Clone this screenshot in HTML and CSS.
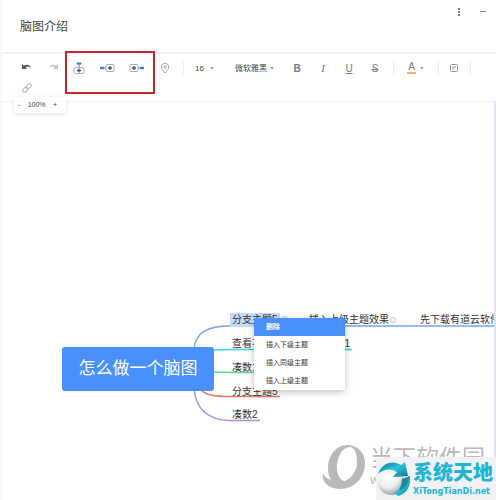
FILE: index.html
```html
<!DOCTYPE html>
<html lang="zh-CN">
<head>
  <meta charset="UTF-8">
  <title>脑图介绍</title>
  <link rel="stylesheet" href="styles.css">
</head>
<body>

<div class="app">
  <header class="header">
    <h1>脑图介绍</h1>
    <div class="window-controls">
      <button aria-label="更多"><svg width="10" height="10" viewBox="0 0 10 10"><path d="M4 1h2v2H4zM4 4h2v2H4zM4 7h2v2H4z" fill="#777b85"/></svg></button>
      <button aria-label="最小化"><svg width="10" height="10" viewBox="0 0 10 10"><path d="M2 4.500h6" stroke="#8a8e99"/></svg></button>
    </div>
  </header>

  <div class="toolbar">
    <button class="tool" aria-label="撤销"><svg width="12" height="12" viewBox="0 0 12 12"><path d="M1 2v5h5L4.500 5.400C6.800 3.800 9 4.300 10.500 7 9.500 2.500 5.500 1.700 2.800 3.800z" fill="#4d5361"/></svg></button>
    <button class="tool" aria-label="重做"><svg width="12" height="12" viewBox="0 0 12 12"><path d="M11 2v5H6l1.500-1.600C5.200 3.800 3 4.300 1.500 7 2.500 2.500 6.500 1.700 9.200 3.800z" fill="#c3c6cc"/></svg></button>
    <button class="tool" aria-label="插入下级主题"><svg width="12" height="14" viewBox="0 0 12 14"><path d="M3.500 2.500h5" stroke="#3c82ec" stroke-width="2"/><path d="M6 3v3" stroke="#3c82ec"/><rect x="1" y="6.500" width="10" height="6" rx="1.500" fill="none" stroke="#a9adb5"/><path d="M6 7.500v4M4 9.500h4" stroke="#4a505e" stroke-width="1.300"/></svg></button>
    <button class="tool wide" aria-label="插入同级主题"><svg width="16" height="12" viewBox="0 0 16 12"><path d="M1 6h4" stroke="#3c82ec" stroke-width="2.500"/><path d="M5 6h2" stroke="#3c82ec"/><rect x="7" y="2.500" width="8" height="7" rx="1" fill="none" stroke="#a9adb5"/><path d="M11 4v4M9 6h4" stroke="#4a505e" stroke-width="1.300"/></svg></button>
    <button class="tool wide" aria-label="插入上级主题"><svg width="16" height="12" viewBox="0 0 16 12"><path d="M11 6h4" stroke="#3c82ec" stroke-width="2.500"/><path d="M9 6h2" stroke="#3c82ec"/><rect x="1" y="2.500" width="8" height="7" rx="1" fill="none" stroke="#a9adb5"/><path d="M5 4v4M3 6h4" stroke="#4a505e" stroke-width="1.300"/></svg></button>
    <button class="tool" aria-label="标记"><svg width="12" height="12" viewBox="0 0 12 12"><path d="M6 11C3.500 8.500 2.300 7 2.300 5a3.700 3.700 0 0 1 7.400 0c0 2-1.200 3.500-3.700 6z" fill="none" stroke="#a2a6ae"/><circle cx="6" cy="5" r="1.200" fill="none" stroke="#a2a6ae"/></svg></button>
    <span class="sep"></span>
    <label class="picker size"><select aria-label="字号"><option>16</option></select><i class="caret"></i></label>
    <label class="picker family"><select aria-label="字体"><option>微软雅黑</option></select><i class="caret"></i></label>
    <button class="tool" aria-label="加粗"><b>B</b></button>
    <button class="tool" aria-label="斜体"><em>I</em></button>
    <button class="tool" aria-label="下划线"><u>U</u></button>
    <button class="tool" aria-label="删除线"><s>S</s></button>
    <span class="sep"></span>
    <button class="tool color" aria-label="文字颜色"><span>A</span><i class="caret"></i></button>
    <span class="sep"></span>
    <button class="tool note" aria-label="备注"><svg width="10" height="10" viewBox="0 0 10 10"><rect x="1.500" y="1.500" width="7" height="7" rx="1" fill="none" stroke="#9094a0"/><path d="M3 4h4M3 6h2.500" stroke="#9094a0"/></svg></button>
    <span class="sep"></span>
    <button class="tool" aria-label="链接"><svg width="12" height="12" viewBox="0 0 12 12"><g fill="none" stroke="#b4b7bd" transform="rotate(-45 6 6)"><rect x=".5" y="4.200" width="6" height="3.600" rx="1.800"/><rect x="5.500" y="4.200" width="6" height="3.600" rx="1.800"/></g></svg></button>
    <div class="callout"></div>
  </div>

  <main class="canvas">
    <div class="zoom-box"><button aria-label="缩小">-</button><span>100%</span><button aria-label="放大">+</button></div>

    <svg class="lines" width="494" height="398" viewBox="0 102 494 398" fill="none" stroke-width="1.500">
      <path d="M194 348c2-15 13-22 36-22h264" stroke="#77a6ea"/>
      <path d="M214 350l18-.5h120" stroke="#3ccfd5"/>
      <path d="M214 372l18 .5h46" stroke="#5bd58f"/>
      <path d="M200 389c5 6 14 7.500 30 7.500h50" stroke="#e8726c"/>
      <path d="M194 389c2 20 14 31 36 31.500h30" stroke="#a592e4"/>
    </svg>

    <div class="node root">怎么做一个脑图</div>
    <div class="node n1 selected">分支主题5</div>
    <div class="node n2">插入上级主题效果<i class="dot"></i></div>
    <div class="node n3">先下载有道云软件</div>
    <div class="node n4"><span>查看不同主题</span><span>1</span></div>
    <div class="node n5">凑数1</div>
    <div class="node n6">分支主题5</div>
    <div class="node n7">凑数2</div>
    <i class="dot n1-dot"></i>

    <div class="menu">
      <button class="active">删除</button>
      <button>插入下级主题</button>
      <button>插入同级主题</button>
      <button>插入上级主题</button>
    </div>

    <div class="watermark">
      <svg width="44" height="48" viewBox="0 0 44 48"><path fill-rule="evenodd" d="M25 2C14 2 6 13 6 25c0 5 1 9 3 12-4-1-7-4-8-7-2 10 7 16 17 16 15 0 25-12 25-26C43 9 35 2 25 2zM28 4C18 5 15 17 15 25c0 6 3 13 8 13 8-4 12-11 12-19 0-8-2-14-7-15z" fill="#b9b9b9"/></svg>
      <div><strong>当下软件园</strong><small>www.downxia.com</small></div>
    </div>
    <div class="badge">
      <svg width="36" height="38" viewBox="0 0 36 38">
        <defs>
          <radialGradient id="ball" cx=".4" cy=".3" r=".7"><stop offset="0" stop-color="#fff"/><stop offset=".6" stop-color="#eceeef"/><stop offset="1" stop-color="#9da3a7"/></radialGradient>
          <linearGradient id="arrow" x2="1" y2="1"><stop offset="0" stop-color="#166783"/><stop offset=".5" stop-color="#29c5dc"/><stop offset="1" stop-color="#126e8c"/></linearGradient>
        </defs>
        <circle cx="15" cy="22" r="13" fill="url(#ball)"/>
        <path d="M2 14C5 4 16-1 25 5l4-3 3 14-15 1 4-5C14 8 8 9 2 14z" fill="url(#arrow)"/>
        <path d="M34 16c1 9-2 17-12 20l-4-3c5-3 8-7 8-14z" fill="url(#arrow)"/>
        <path d="M34 16l-8 3c0 5-1 8-3 11 5-1 9-6 11-14z" fill="#0f536b" opacity=".5"/>
      </svg>
      <div><strong>系统天地</strong><small>XiTongTianDi.net</small></div>
    </div>
  </main>
</div>

</body>
</html>
```

FILE: styles.css
```css
* { box-sizing:border-box; }
body { margin:0; font-family:"Liberation Sans","Noto Sans CJK SC",sans-serif; background:#fff; color:#333; }
button, select { font:inherit; color:inherit; background:none; border:none; padding:0; margin:0; cursor:pointer; }
svg { display:block; }

.app { min-height:100vh; display:flex; flex-direction:column; border-left:2px solid #f7f7f9; overflow:hidden; }

.header { height:54px; display:flex; justify-content:space-between; border-bottom:2px solid #f1f1f4; padding:0 8px 0 18px; }
.header h1 { margin:0; font-size:12px; line-height:54px; font-weight:normal; color:#444; }
.window-controls { display:flex; gap:14px; height:24px; align-items:center; }

.toolbar { position:relative; display:flex; flex-wrap:wrap; align-content:flex-start; padding:4px 0 3px 12px; border-bottom:1px solid #f1f1f4; }
.tool { width:26px; height:20px; display:flex; align-items:center; justify-content:center; font-size:10px; color:#737988; }
.tool.wide { width:30px; }
.tool b { font-weight:bold; }
.tool em { font-family:"Liberation Serif",serif; font-size:11px; }
.tool.color { width:35px; gap:4px; }
.tool.color span { line-height:10px; border-bottom:2px solid #f2b75c; padding:0 1px; }
.tool.note { width:22px; }
.sep { width:10px; height:12px; margin:4px 0; background:linear-gradient(#ececf0,#ececf0) center / 1px 100% no-repeat; }
.picker { display:flex; align-items:center; height:20px; }
.picker select { appearance:none; flex:1; min-width:0; font-size:8px; color:#444; }
.picker.size { width:40px; padding:0 14px 0 7px; }
.picker.family { width:56px; padding:0 10px 0 7px; }
.caret { width:4px; height:3px; background:#8b8f9a; clip-path:polygon(0 0,100% 0,50% 100%); }
.callout { position:absolute; left:63px; top:-3px; width:90px; height:43px; border:2px solid #c2272d; pointer-events:none; }

.canvas { flex:1; position:relative; min-height:398px; border-right:2px solid #dfe1f1; font-size:10px; line-height:14px; }
.zoom-box { position:absolute; left:12px; top:-5px; width:52px; height:16px; background:#fff; box-shadow:0 1px 4px rgba(70,90,140,0.2); display:flex; align-items:center; justify-content:space-between; padding:0 9px 0 4px; font-size:7px; color:#444; }
.lines { position:absolute; left:-2px; top:0; }

.node { position:absolute; white-space:nowrap; color:#333; }
.root { left:60px; top:245px; width:152px; height:44px; line-height:44px; border-radius:3px; background:#4a90fb; color:#fff; font-size:17px; text-align:center; }
.selected { background:#c3dcfa; }
.n1 { left:228px; top:211px; padding:0 2px; }
.n2 { left:307px; top:211px; display:flex; align-items:center; gap:1px; }
.n3 { left:418px; top:211px; right:0; overflow:hidden; }
.n4 { left:230px; top:235px; width:118px; display:flex; justify-content:space-between; }
.n5 { left:230px; top:259px; }
.n6 { left:230px; top:283px; }
.n7 { left:230px; top:306px; }
.dot { width:6px; height:6px; border:1px solid #c5c8d0; border-radius:50%; }
.n1-dot { position:absolute; left:280px; top:214px; }

.menu { position:absolute; left:252px; top:216px; width:91px; background:#fff; box-shadow:0 2px 7px rgba(0,0,0,0.25); font-size:7px; }
.menu button { display:block; width:100%; height:18px; padding-left:12px; text-align:left; }
.menu .active { background:#4a90fb; color:#fff; font-weight:bold; }

.watermark { position:absolute; left:320px; top:341px; display:flex; gap:4px; color:#b9b9b9; }
.watermark strong { display:block; font-size:23px; line-height:30px; font-weight:normal; white-space:nowrap; }
.watermark small { font-size:13px; }
.badge { position:absolute; right:-2px; bottom:0; width:120px; height:43px; background:#f1f2f3; display:flex; align-items:center; gap:1px; color:#20b4d3; }
.badge svg { flex:none; }
.badge strong { display:block; font-size:20px; line-height:26px; font-weight:900; white-space:nowrap; }
.badge small { display:block; font:bold 8px/12px "DejaVu Sans",sans-serif; }
```
